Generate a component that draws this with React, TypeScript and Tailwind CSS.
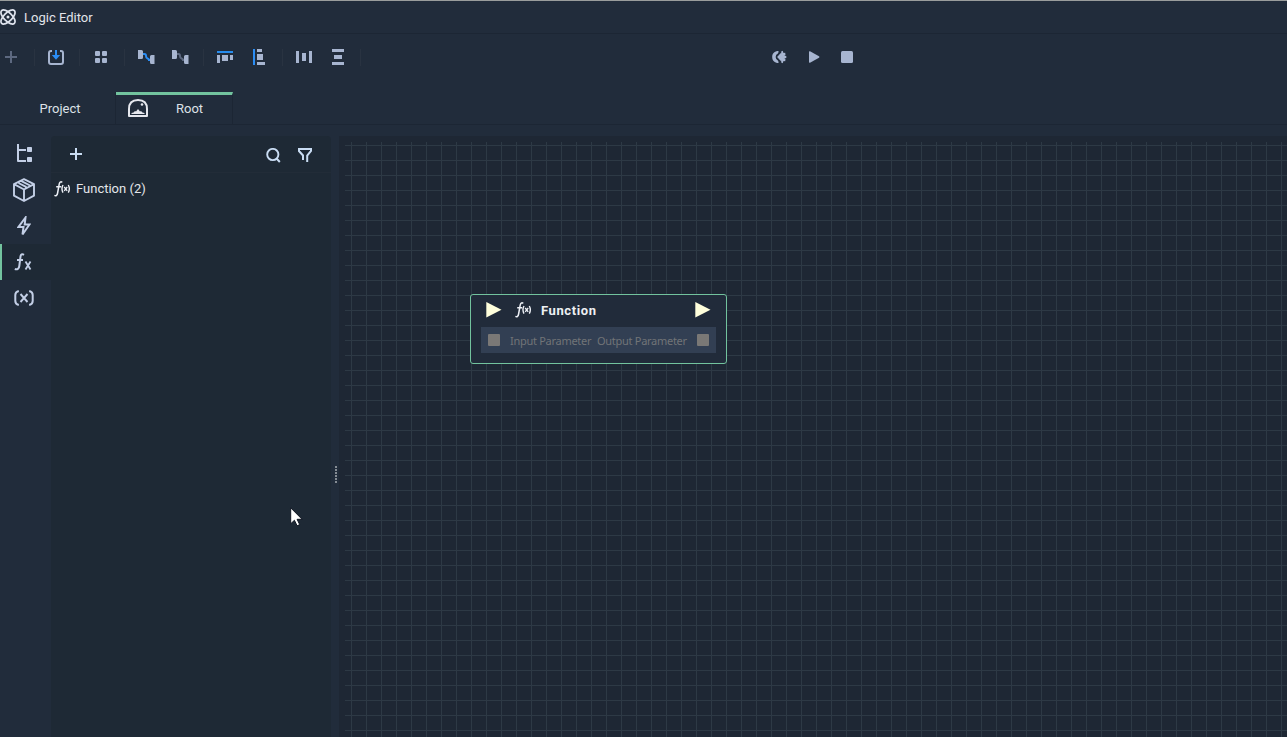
import type { ReactNode } from "react";

type IconProps = { w: number; h: number; className?: string; children: ReactNode };

function Icon({ w, h, className = "", children }: IconProps) {
  return (
    <svg width={w} height={h} viewBox={`0 0 ${w} ${h}`} fill="none" className={`shrink-0 ${className}`}>
      {children}
    </svg>
  );
}

const steel = "#a7b5d0";
const blue = "#2b8df5";

function AtomIcon() {
  return (
    <Icon w={16} h={16} className="text-[#dfe4ee]">
      <g stroke="currentColor" strokeWidth="1.7">
        <ellipse cx="8" cy="8" rx="9" ry="4.2" transform="rotate(45 8 8)" />
        <ellipse cx="8" cy="8" rx="9" ry="4.2" transform="rotate(-45 8 8)" />
      </g>
      <circle cx="8" cy="8" r="1.5" fill="currentColor" />
    </Icon>
  );
}

function LinkIcon({ line }: { line: string }) {
  return (
    <Icon w={17} h={14}>
      <path d="M4 4h2.500q1.500 0 1.500 2t1.500 2.500 1.500 1.500h2" stroke={line} strokeWidth="2" />
      <path d="M0 0h3.500q1.500 0 1.500 1.500v6q0 1.500-1.500 1.500H0zM16.500 5h-3q-1.500 0-1.500 1.500v6q0 1.500 1.500 1.500h3z" fill={steel} />
    </Icon>
  );
}

function FxIcon() {
  return (
    <Icon w={17} h={16} className="text-[#eef1f7]">
      <path d="M8.300 1.300C6.600.2 5.600 1.300 5.200 3.200L3.600 12c-.4 2.300-1.500 3.300-3.200 2.400M2.200 5.800h5" stroke="currentColor" strokeWidth="1.500" />
      <path d="M9 4c-1.200 2.200-1.200 5.400 0 7.600M14.300 4c1.200 2.200 1.200 5.400 0 7.600" stroke="currentColor" strokeWidth="1.400" />
      <path d="M10.200 6l3 3.800M13.200 6l-3 3.800" stroke="currentColor" strokeWidth="1.300" />
    </Icon>
  );
}

function Separator() {
  return <span className="h-[17px] w-px bg-[#293341]" />;
}

function TitleBar() {
  return (
    <header className="flex h-[34px] shrink-0 items-center gap-2 border-t border-b border-t-[#9a9d9c] border-b-[#1c2634] text-[#e2e5ea]">
      <AtomIcon />
      <h1 className="pt-0.5">Logic Editor</h1>
    </header>
  );
}

function Toolbar() {
  return (
    <div className="flex h-[46px] shrink-0 items-center pl-[5px]">
      <Icon w={12} h={12}><path d="M6 0v12M0 6h12" stroke="#5d6980" strokeWidth="2" /></Icon>
      <div className="flex w-[18px] justify-end"><Separator /></div>
      <div className="flex w-[45px] items-center justify-between pl-[13px]">
        <Icon w={16} h={15}>
          <path d="M4 1H3Q1 1 1 3v9q0 2 2 2h10q2 0 2-2V3q0-2-2-2h-1" stroke={steel} strokeWidth="2" />
          <path d="M8 0v6" stroke={blue} strokeWidth="2" /><path d="M3.800 5h8.400L8 9.700z" fill={blue} />
        </Icon>
        <Separator />
      </div>
      <div className="flex w-[45px] items-center justify-between pl-[15px]">
        <Icon w={12} h={12}>
          <g fill={steel}><rect width="5" height="5" rx="1" /><rect x="7" width="5" height="5" rx="1" /><rect y="7" width="5" height="5" rx="1" /><rect x="7" y="7" width="5" height="5" rx="1" /></g>
        </Icon>
        <Separator />
      </div>
      <div className="flex w-[79px] items-center pl-[13px]">
        <LinkIcon line={blue} />
        <div className="ml-[17px] flex"><LinkIcon line="#5d6980" /></div>
        <div className="ml-auto flex"><Separator /></div>
      </div>
      <div className="flex w-[79px] items-center pl-[13px]">
        <Icon w={16} h={12}>
          <path d="M0 1h16" stroke="#268cee" strokeWidth="2" />
          <path d="M0 4h3v8H0zM5 4h6v6H5zM13 4h3v5h-3z" fill={steel} />
        </Icon>
        <Icon w={12} h={16} className="ml-5">
          <path d="M1 0v16" stroke={blue} strokeWidth="2" />
          <path d="M4 0h5v3H4zM4 5h6v6H4zM4 13h8v3H4z" fill={steel} />
        </Icon>
        <div className="ml-auto flex"><Separator /></div>
      </div>
      <div className="flex w-[78px] items-center pl-[13px]">
        <Icon w={16} h={12}><path d="M0 0h3v12H0zM6 2h4v8H6zM13 0h3v12h-3z" fill={steel} /></Icon>
        <Icon w={12} h={16} className="ml-5"><path d="M0 0h12v3H0zM2 6h8v4H2zM0 13h12v3H0z" fill={steel} /></Icon>
        <div className="ml-auto flex"><Separator /></div>
      </div>
      <div className="ml-[411px] flex items-center">
        <Icon w={15} h={14}>
          <path d="M6.500 1C2.500 1 .200 3.500.200 7s2.300 6 6.300 6v-2.200Q3.600 9.500 3.600 7t2.900-3.800z" fill={steel} />
          <path d="M5 7l3.500-3.800h.7V1.500L10.700.7l.8 2.300 1.700-.3.300 2-1.200.9 2 .5v1.800l-2 .5 1.200.9-.3 2-1.700-.3-.8 2.300-1.500-.8v-1.700h-.7z" fill={steel} />
          <path d="M8 2L4.800 6M4.800 8L8 12" stroke="#212c3b" strokeWidth="1.300" />
        </Icon>
        <Icon w={11} h={12} className="ml-[22px]"><path d="M0 1q0-1 1-.7l9 5q1 .7 0 1.400l-9 5q-1 .3-1-.7z" fill={steel} /></Icon>
        <Icon w={12} h={12} className="ml-[21px]"><rect width="12" height="12" rx="1.500" fill={steel} /></Icon>
      </div>
    </div>
  );
}

function Tabs() {
  return (
    <nav className="mt-3 flex h-[33px] shrink-0 border-b border-[#1c2634] text-[#dde1e7]">
      <button className="w-[116px] pl-1 pt-px">Project</button>
      <button className="flex w-[117px] items-center border-t-[3px] border-r border-t-[#72c39e] border-r-[#1c2634] pb-0.5 pl-3 shadow-[-1px_0_0_#1c2634]">
        <Icon w={20} h={18} className="-mt-0.5">
          <path d="M1 17V10C1 4 4.500 1 10 1s9 3 9 9v7z" stroke="#e6e8ee" strokeWidth="2" strokeLinejoin="round" />
          <path d="M3.500 15v-1l2-.5 1.500-1.500 1 .5 2-2.500 2 2.500 1-.5 1.500 1.500 2 .5v1z" fill="#e6e8ee" /><circle cx="14" cy="5.500" r="1.300" fill="#e6e8ee" />
        </Icon>
        <span className="ml-7">Root</span>
      </button>
    </nav>
  );
}

function RailItem({ active = false, children }: { active?: boolean; children: ReactNode }) {
  return (
    <button className={`flex h-9 w-[51px] items-center justify-center border-l-2 pr-[5px] text-[#c3cfe6] ${active ? "border-[#72c39e] bg-[#1e2935]" : "border-transparent"}`}>
      {children}
    </button>
  );
}

function SideRail() {
  return (
    <aside className="flex w-[51px] shrink-0 flex-col">
      <RailItem>
        <Icon w={16} h={18} className="-mt-0.5 ml-px"><path d="M1 0v17h8M1 6h8" stroke="currentColor" strokeWidth="2" strokeLinejoin="round" /><rect x="10" y="3" width="5" height="5" rx=".7" fill="currentColor" /><rect x="10" y="13" width="5" height="5" rx=".7" fill="currentColor" /></Icon>
      </RailItem>
      <RailItem>
        <Icon w={22} h={24}><path d="M11 1.200l10 5v11.500L11 23 1 17.700V6.200zM1 6.200l10 5.300 10-5.300M11 11.500V23M5.500 5l8 4.200M9 3.300l8 4.200" stroke="currentColor" strokeWidth="1.900" strokeLinejoin="round" /></Icon>
      </RailItem>
      <RailItem>
        <Icon w={14} h={20}><path d="M8.500 1.500L1.500 11h5L5.500 18.500 12.500 8.500H7.700z" stroke="currentColor" strokeWidth="2" /></Icon>
      </RailItem>
      <RailItem active>
        <Icon w={18} h={18} className="-ml-0.5"><path d="M10 1.800C7.900.5 6.800 1.400 6.500 3.500L5.300 13c-.3 2.800-2 4-4.500 3M3 7h6" stroke="currentColor" strokeWidth="2" /><path d="M11.500 8.500l5 8M16.500 8.500l-5 8" stroke="currentColor" strokeWidth="1.800" /></Icon>
      </RailItem>
      <RailItem>
        <Icon w={20} h={16}><path d="M4.800 1Q1.300 1.800 1.300 5v6q0 3.200 3.500 4M15.200 1q3.500.8 3.500 4v6q0 3.200-3.500 4" stroke="currentColor" strokeWidth="2" /><path d="M6.500 4l7 8M13.500 4l-7 8" stroke="currentColor" strokeWidth="1.900" /></Icon>
      </RailItem>
    </aside>
  );
}

function FunctionPanel() {
  return (
    <section className="w-[280px] shrink-0 rounded-t-sm bg-[#1e2935]">
      <div className="flex h-[37px] items-center border-b border-[#222c38] pl-[19px] text-[#c9dcf3]">
        <Icon w={12} h={12}><path d="M6 0v12M0 6h12" stroke="currentColor" strokeWidth="2" /></Icon>
        <Icon w={15} h={15} className="mt-[3px] ml-[184px]"><circle cx="6.800" cy="6.500" r="5.600" stroke="currentColor" strokeWidth="1.900" /><path d="M10.300 10.300l3.500 3.700" stroke="currentColor" strokeWidth="2" /></Icon>
        <Icon w={14} h={14} className="mt-0.5 ml-[17px]"><path d="M5 12V7.500L1 3V1h12v2L9.200 7.500V14" stroke="currentColor" strokeWidth="2" /></Icon>
      </div>
      <div className="flex h-[31px] items-center gap-[5px] pl-[3px] text-[#e4e6ea]">
        <FxIcon />
        <span>Function (2)</span>
      </div>
    </section>
  );
}

function Splitter() {
  return (
    <div className="flex w-2 shrink-0 flex-col items-center gap-px pt-[330px] pl-[2px]">
      {[0, 1, 2, 3, 4, 5].map((dot) => <span key={dot} className="h-0.5 w-0.5 bg-[#858c94]" />)}
    </div>
  );
}

function Arrow() {
  return <Icon w={16} h={16} className="-mt-px"><path d="M.3 0v15.500L15.500 7.800z" fill="#ffffdc" /></Icon>;
}

function FunctionNode() {
  return (
    <article className="absolute top-[152px] left-[125px] h-[70px] w-[257px] rounded-[3px] border border-[#72c39e] bg-[#212b3a] px-2.5">
      <div className="flex h-8 items-center pb-px pl-[5px]">
        <Arrow />
        <div className="-mt-px ml-[13px]"><FxIcon /></div>
        <h2 className="ml-[9px] pt-px font-bold tracking-[0.6px] text-[#eef0f3]">Function</h2>
        <div className="ml-auto pr-[5px]"><Arrow /></div>
      </div>
      <div className="flex h-[26px] items-center bg-[#323f53] px-[7px] font-['Noto_Sans',sans-serif] text-[11px] tracking-[-0.28px] whitespace-nowrap text-[#717477]">
        <span className="h-3 w-3 shrink-0 rounded-[1px] bg-[#7a7876]" />
        <span className="ml-2.5 w-[87px] pt-px">Input Parameter</span>
        <span className="pt-px">Output Parameter</span>
        <span className="ml-auto h-3 w-3 shrink-0 rounded-[1px] bg-[#7a7876]" />
      </div>
    </article>
  );
}

function Canvas() {
  return (
    <main className="min-w-0 flex-1 bg-[#1e2734] pt-1.5 pl-1.5">
      <div className="relative h-full bg-[linear-gradient(to_right,#2d3945_1px,transparent_1px),linear-gradient(to_bottom,#2d3945_1px,transparent_1px)] bg-size-[15px_15px] bg-position-[6px_3px]">
        <FunctionNode />
      </div>
    </main>
  );
}

export default function App() {
  return (
    <div className="relative flex h-screen flex-col overflow-hidden bg-[#212c3b] font-[Roboto,sans-serif] text-[13px] leading-4 text-white">
      <TitleBar />
      <Toolbar />
      <Tabs />
      <div className="mt-[11px] flex min-h-0 flex-1">
        <SideRail />
        <FunctionPanel />
        <Splitter />
        <Canvas />
      </div>
      <Icon w={14} h={20} className="absolute top-[507px] left-[290px]">
        <path d="M.7.8v16l3.700-3.500 2.700 5.500 2.600-1.200-2.600-5.300h5z" fill="white" stroke="#101622" />
      </Icon>
    </div>
  );
}
